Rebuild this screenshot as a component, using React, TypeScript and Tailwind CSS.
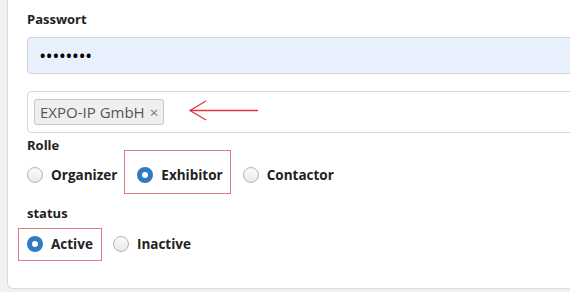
import React from "react";

function Radio({ label, checked }: { label: string; checked?: boolean }) {
  return (
    <label className="flex items-center gap-[8px] h-[26px]">
      {checked ? (
        <span className="w-[16px] h-[16px] rounded-full bg-[#2f7bc1] flex items-center justify-center">
          <span className="w-[6px] h-[6px] rounded-full bg-white" />
        </span>
      ) : (
        <span className="w-[16px] h-[16px] rounded-full border border-[#b5b5b5] bg-gradient-to-b from-[#fafafa] to-[#e9e9e9]" />
      )}
      <span className="text-[13.5px] font-bold text-[#222]">{label}</span>
    </label>
  );
}

export default function App() {
  return (
    <div
      className="w-[570px] h-[292px] overflow-hidden bg-[#f1f1f1] pl-[7px] pb-[3px]"
      style={{ fontFamily: '"Open Sans", "Noto Sans", sans-serif' }}
    >
      <div className="relative w-[620px] h-full bg-white border-l border-b border-[#dcdcdc] rounded-bl-[6px] pl-[19px] pt-[9px]">
        <div className="text-[13px] leading-[20px] font-bold text-[#222]">Passwort</div>
        <div className="mt-[8px] h-[37px] bg-[#e8f0fe] border border-[#cfd4da] rounded-l-[4px] flex items-center pl-[12px]">
          <span className="text-[14px] font-bold text-black tracking-[1.3px]">••••••••</span>
        </div>

        <div className="mt-[17px] h-[42px] bg-white border border-[#d6d6d6] rounded-l-[4px] flex items-center pl-[6px]">
          <span className="h-[26px] flex items-center gap-[5px] px-[5px] bg-[#efefef] border border-[#c8c8c8] rounded-[3px] text-[15px] text-[#555]">
            EXPO-IP GmbH
            <span className="text-[15px] text-[#777]">×</span>
          </span>
        </div>

        <div className="mt-[2px] text-[13px] leading-[20px] font-bold text-[#222]">Rolle</div>
        <div className="mt-[7px] flex items-center gap-[20px]">
          <Radio label="Organizer" />
          <div className="relative">
            <Radio label="Exhibitor" checked />
            <div className="absolute left-[-13px] right-[-8px] top-[-12px] bottom-[-6px] border border-[#e07b80]" />
          </div>
          <Radio label="Contactor" />
        </div>

        <div className="mt-[15px] text-[13px] leading-[20px] font-bold text-[#222]">status</div>
        <div className="mt-[8px] flex items-center gap-[20px]">
          <div className="relative">
            <Radio label="Active" checked />
            <div className="absolute left-[-9px] right-[-9px] top-[-3px] bottom-[-4px] border border-[#e07b80]" />
          </div>
          <Radio label="Inactive" />
        </div>

        <svg className="absolute left-[179px] top-[99px]" width="74" height="24" viewBox="0 0 74 24">
          <path d="M3 11.5 H71" stroke="#e3343f" strokeWidth="1.3" fill="none" />
          <path d="M19 2 L3 11.5 L19 21" stroke="#e3343f" strokeWidth="1.3" fill="none" />
        </svg>
      </div>
    </div>
  );
}
